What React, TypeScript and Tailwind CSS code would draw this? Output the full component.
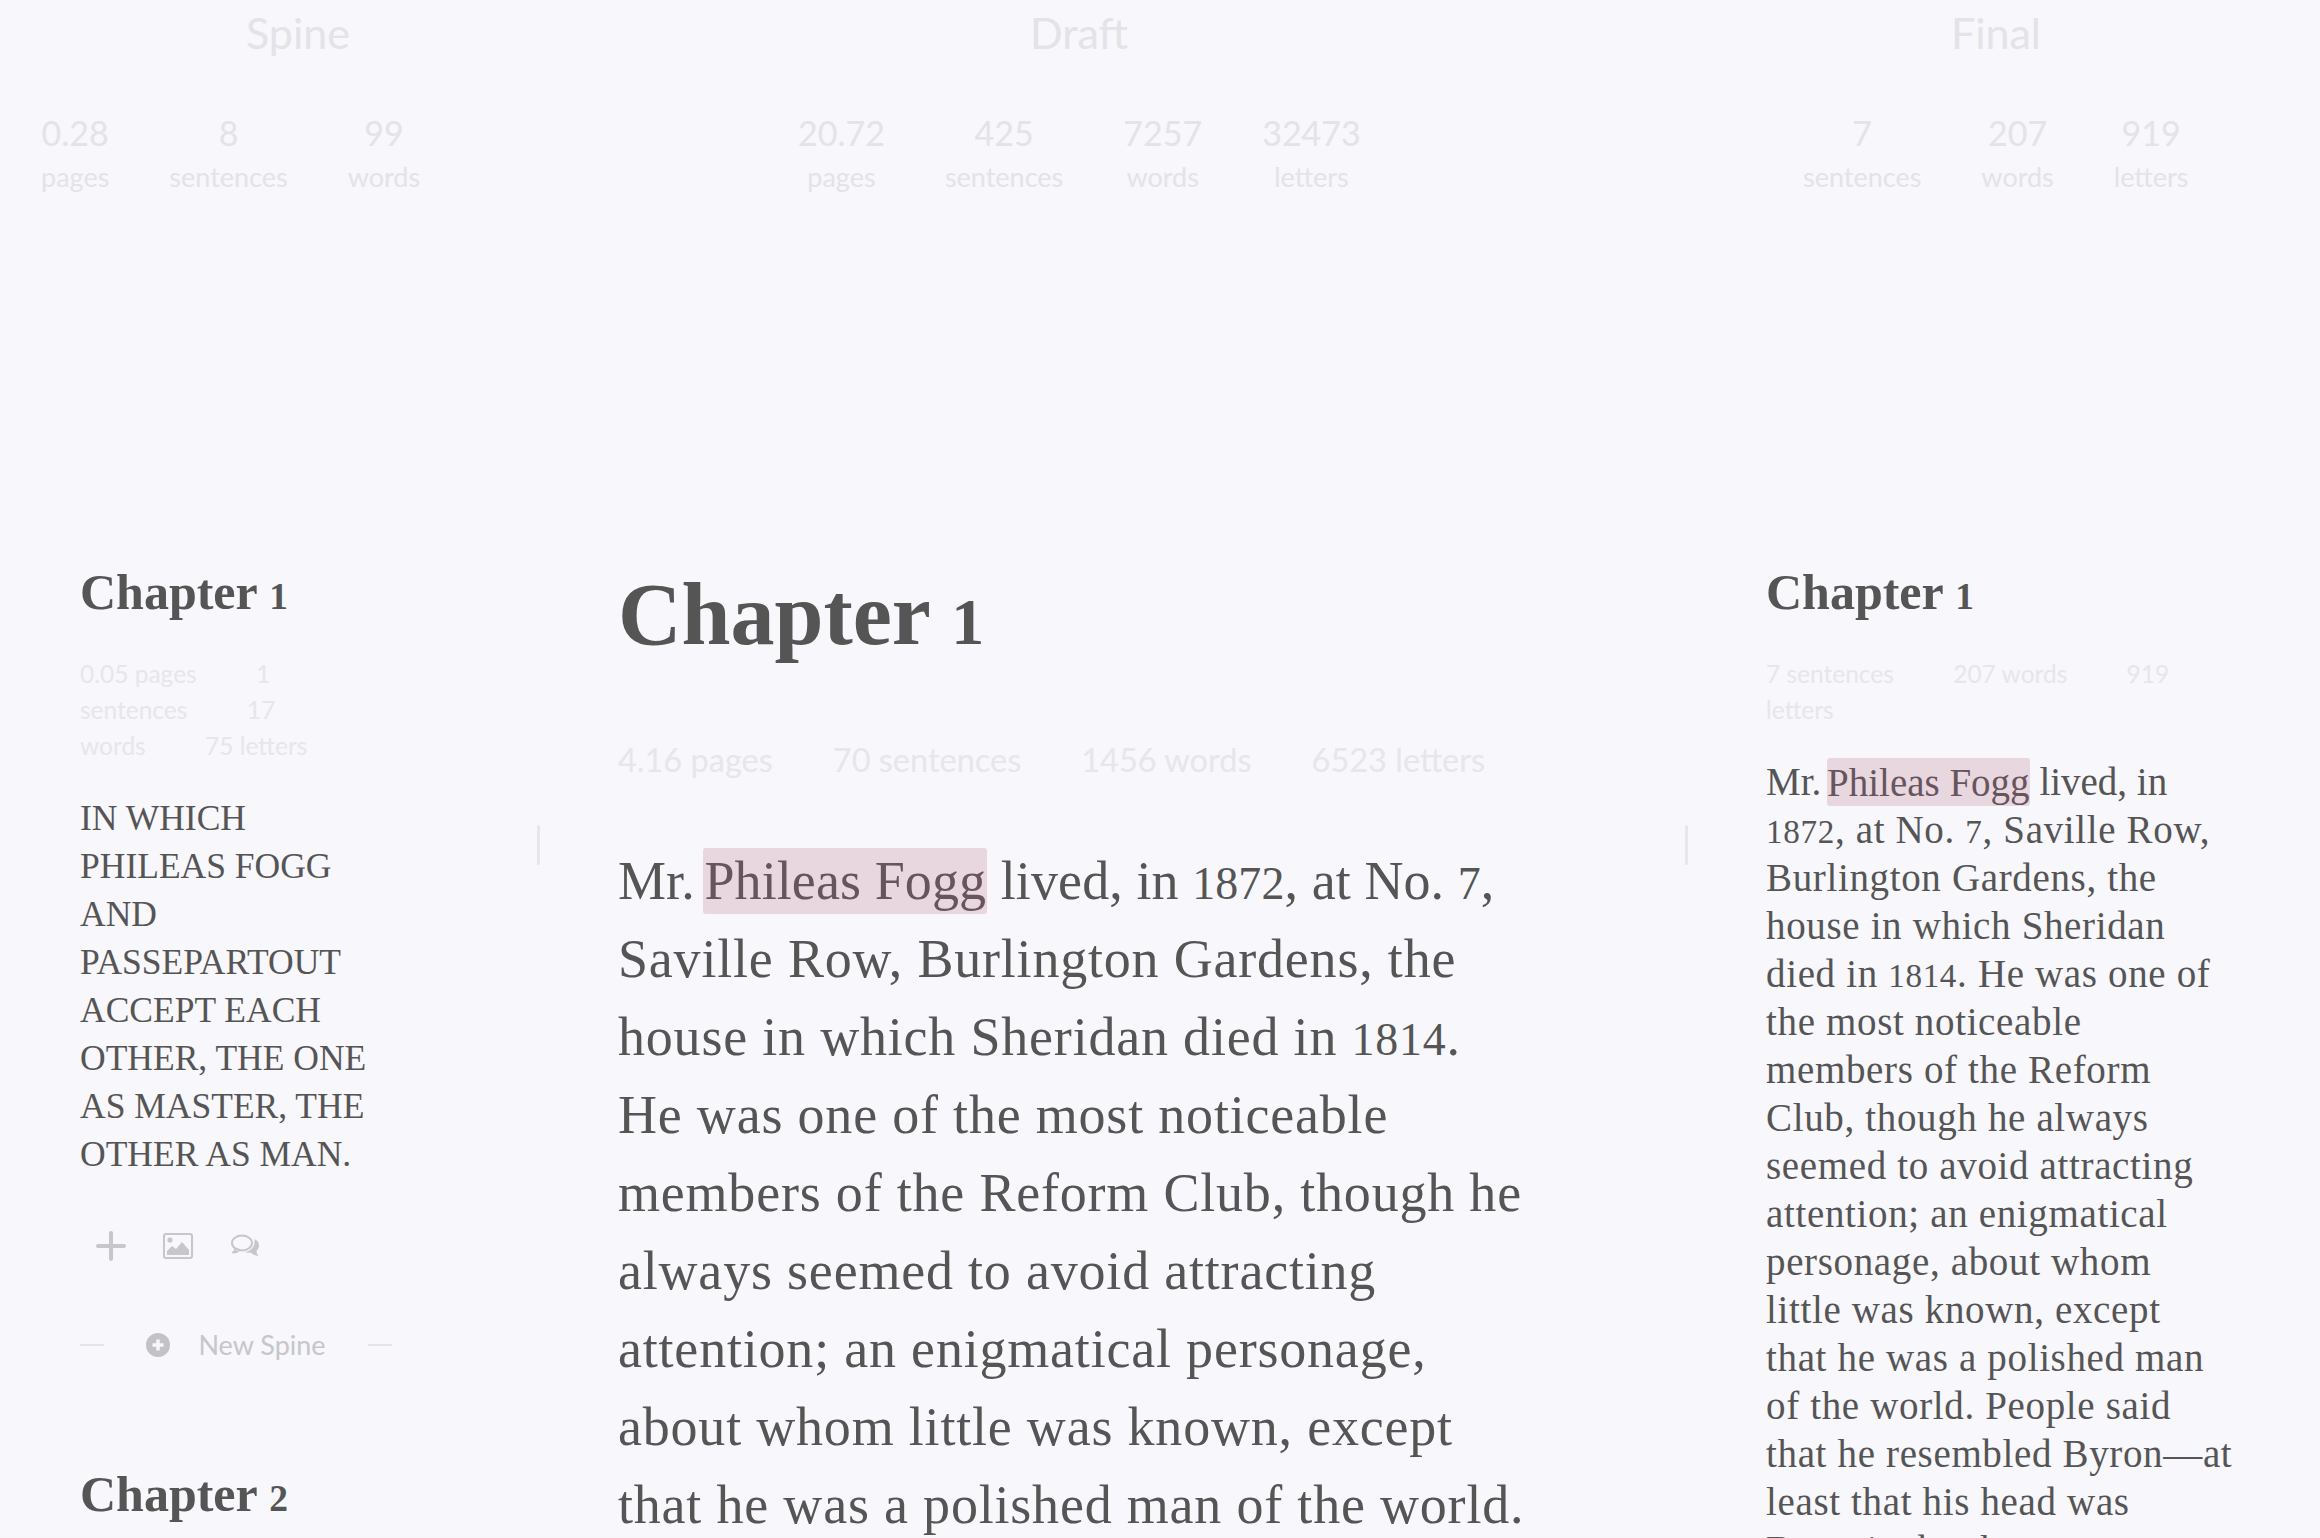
const sans = "font-['Lato','Noto_Sans',sans-serif]";
const serif = "font-['Liberation_Serif','Times_New_Roman',serif]";

function Digits({ text, cls }: { text: string; cls: string }) {
  const parts = text.split(/(\d+)/);
  return (
    <>
      {parts.map((p, i) =>
        /^\d+$/.test(p) ? (
          <span key={i} className={cls}>{p}</span>
        ) : (
          <span key={i}>{p}</span>
        )
      )}
    </>
  );
}

function Stat({ n, l }: { n: string; l: string }) {
  return (
    <div className="flex flex-col items-center">
      <div className="text-[34px] leading-[44px]">{n}</div>
      <div className="text-[27px] leading-[32px] mt-[6px]">{l}</div>
    </div>
  );
}

function Col({ title, stats, titleW, pad, w }: { title: string; stats: [string, string][]; titleW: string; pad: string; w: string }) {
  return (
    <div className={w}>
      <div className={`${titleW} text-center text-[43px] leading-[48px] mt-[9px]`}>{title}</div>
      <div className={`flex gap-[60px] mt-[54px] ${pad}`}>
        {stats.map(([n, l]) => (
          <Stat key={l} n={n} l={l} />
        ))}
      </div>
    </div>
  );
}

function Bar() {
  return <div className="w-[3px] h-[40px] rounded-sm bg-[#e6e6eb] mt-[282px] shrink-0" />;
}

function Plus() {
  return (
    <svg width="30" height="30" viewBox="0 0 30 30" className="text-[#c6c6cb]">
      <path d="M15 2v26M2 15h26" stroke="currentColor" strokeWidth="4" strokeLinecap="round" fill="none" />
    </svg>
  );
}
function ImageIcon() {
  return (
    <svg width="30" height="26" viewBox="0 0 30 26" className="text-[#c6c6cb]">
      <rect x="1" y="1" width="28" height="24" rx="2" stroke="currentColor" strokeWidth="2" fill="none" />
      <circle cx="7" cy="7" r="2.600" fill="currentColor" />
      <path d="M4 22v-4l5-5 4 3 6-7 7 8v5z" fill="currentColor" />
    </svg>
  );
}
function Comments() {
  return (
    <svg width="30" height="24" viewBox="0 0 30 24" className="text-[#c6c6cb]">
      <ellipse cx="12" cy="9" rx="10" ry="7.500" stroke="currentColor" strokeWidth="2" fill="none" />
      <path d="M5.500 14.500c0 1.500-1 3-2.500 4 2.500 0 5-1 6.500-2.500z" fill="#f7f7fc" stroke="currentColor" strokeWidth="2" strokeLinejoin="round" />
      <path d="M24.500 5c3 1.500 4.500 3.800 4.500 6.500 0 2.300-1 4-2.500 5.300.1 2 .8 3.700 2 5.200-3-.3-5.700-1.500-7.500-3.300-2.300.3-4.500 0-6.500-.7 5.500-.5 11-4.500 10-13z" fill="currentColor" />
    </svg>
  );
}
function PlusCircle() {
  return (
    <svg width="24" height="24" viewBox="0 0 24 24" className="text-[#c2c2c7]">
      <circle cx="12" cy="12" r="12" fill="currentColor" />
      <path d="M12 6.500v11M6.500 12h11" stroke="#f7f7fc" strokeWidth="3.500" />
    </svg>
  );
}

function Hl({ children, cls }: { children: string; cls: string }) {
  return <span className={`bg-[#e9d7e0] text-[#67555e] rounded-[3px] ${cls}`}>{children}</span>;
}

const small = "text-[0.85em] leading-[0]";

function Lines({ lines }: { lines: string[] }) {
  return (
    <>
      {lines.map((l) => (
        <div key={l} className="whitespace-nowrap"><Digits text={l} cls={small} /></div>
      ))}
    </>
  );
}

function H2({ n, cls }: { n: string; cls: string }) {
  return (
    <h2 className={`${serif} font-bold text-[50px] leading-[60px] ${cls}`}>
      Chapter <span className="text-[0.75em] leading-[0]">{n}</span>
    </h2>
  );
}

export default function App() {
  return (
    <div className={`w-[2320px] h-[1538px] overflow-hidden bg-[#f7f7fc] text-[#555555] ${sans}`}>
      <div className="flex h-[543px] text-[#e3e3e8]">
        <Col w="w-[780px]" titleW="w-[596px]" pad="pl-[41px]" title="Spine" stats={[["0.28", "pages"], ["8", "sentences"], ["99", "words"]]} />
        <Col w="w-[892px]" titleW="w-[598px]" pad="pl-[18px]" title="Draft" stats={[["20.72", "pages"], ["425", "sentences"], ["7257", "words"], ["32473", "letters"]]} />
        <Col w="w-[648px]" titleW="w-[648px]" pad="pl-[131px]" title="Final" stats={[["7", "sentences"], ["207", "words"], ["919", "letters"]]} />
      </div>

      <div className="flex">
        <div className="w-[537px] pl-[80px] shrink-0">
          <H2 n="1" cls="mt-[19px]" />
          <div className="text-[24.5px] leading-[36px] text-[#e6e6eb] mt-[34px] w-[250px]">
            <span className="mr-[53px]">0.05 pages</span> <span className="mr-[53px]">1 sentences</span> <span className="mr-[53px]">17 words</span> <span>75 letters</span>
          </div>
          <div className={`${serif} text-[35.500px] leading-[48px] mt-[30px]`}>
            <Lines lines={["IN WHICH", "PHILEAS FOGG", "AND", "PASSEPARTOUT", "ACCEPT EACH", "OTHER, THE ONE", "AS MASTER, THE", "OTHER AS MAN."]} />
          </div>
          <div className="flex items-center mt-[53px] pl-[16px] gap-[37px]">
            <Plus />
            <ImageIcon />
            <Comments />
          </div>
          <div className="flex items-center mt-[64px] w-[312px] justify-between">
            <div className="w-[24px] h-[2px] bg-[#e4e4e9]" />
            <div className="flex items-center gap-[28px] text-[#c6c6cb] text-[27px]">
              <PlusCircle />
              <span>New Spine</span>
            </div>
            <div className="w-[24px] h-[2px] bg-[#e4e4e9]" />
          </div>
          <H2 n="2" cls="mt-[98px]" />
        </div>
        <Bar />

        <div className="w-[1145px] pl-[78px] shrink-0">
          <h1 className={`${serif} font-bold text-[88px] leading-[100px] mt-[22px]`}>Chapter <span className="text-[0.75em] leading-[0]">1</span></h1>
          <div className="flex gap-[60px] text-[32.500px] leading-[40px] text-[#e6e6eb] mt-[75px]">
            <span>4.16 pages</span><span>70 sentences</span><span>1456 words</span><span>6523 letters</span>
          </div>
          <div className={`${serif} text-[54px] leading-[78px] tracking-[0.8px] mt-[62px]`}>
            <div className="whitespace-nowrap tracking-[0.1px]">Mr. <Hl cls="py-[3px] px-[1px] -ml-[5px]">Phileas Fogg</Hl> <Digits text="lived, in 1872, at No. 7," cls={small} /></div>
            <Lines lines={["Saville Row, Burlington Gardens, the", "house in which Sheridan died in 1814.", "He was one of the most noticeable", "members of the Reform Club, though he", "always seemed to avoid attracting", "attention; an enigmatical personage,", "about whom little was known, except", "that he was a polished man of the world."]} />
          </div>
        </div>
        <Bar />

        <div className="pl-[78px] flex-1">
          <H2 n="1" cls="mt-[19px]" />
          <div className="text-[24.5px] leading-[36px] text-[#e6e6eb] mt-[34px] w-[430px]">
            <span className="mr-[53px]">7 sentences</span> <span className="mr-[53px]">207 words</span> <span>919 letters</span>
          </div>
          <div className={`${serif} text-[39px] leading-[48px] tracking-[0.65px] mt-[30px]`}>
            <div className="whitespace-nowrap tracking-[0px]">Mr. <Hl cls="py-[2.500px] -ml-[4px]">Phileas Fogg</Hl> lived, in</div>
            <Lines lines={["1872, at No. 7, Saville Row,", "Burlington Gardens, the", "house in which Sheridan", "died in 1814. He was one of", "the most noticeable", "members of the Reform", "Club, though he always", "seemed to avoid attracting", "attention; an enigmatical", "personage, about whom", "little was known, except", "that he was a polished man", "of the world. People said", "that he resembled Byron—at", "least that his head was", "Byronic; but he was"]} />
          </div>
        </div>
      </div>
    </div>
  );
}
